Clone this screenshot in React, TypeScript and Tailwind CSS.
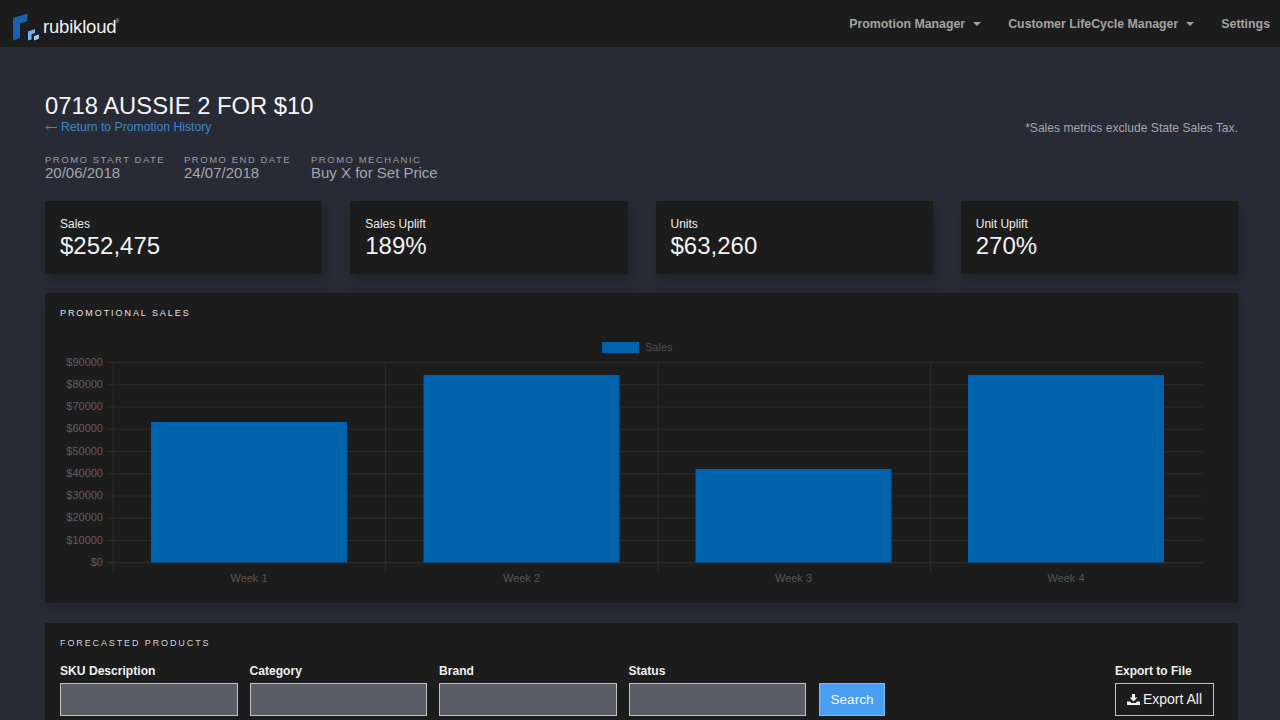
const font = "font-['Liberation_Sans',Arial,sans-serif]";

function Caret() {
  return <span className="ml-[8px] inline-block h-0 w-0 border-x-[4px] border-t-[4px] border-x-transparent border-t-[#a3a3a3] align-middle" />;
}

function Stat({ label, value }: { label: string; value: string }) {
  return (
    <div className="h-[73px] flex-1 bg-[#1c1c1c] px-[15px] pt-[16px] shadow-[3px_6px_12px_rgba(0,0,0,0.25)]">
      <div className="text-[12px] leading-[15px] text-[#eeeeee]">{label}</div>
      <div className="text-[24px] leading-[28px] text-[#f2f2f2]">{value}</div>
    </div>
  );
}

function Meta({ label, value, className }: { label: string; value: string; className: string }) {
  return (
    <div className={className}>
      <div className="text-[9.5px] leading-[10px] tracking-[0.16em] text-[#9a9ca3]">{label}</div>
      <div className="text-[15px] leading-[16px] text-[#a4a6ac]">{value}</div>
    </div>
  );
}

function Field({ label }: { label: string }) {
  return (
    <div className="w-[177.5px]">
      <div className="text-[12.1px] font-bold leading-[16px] text-[#f0f0f0]">{label}</div>
      <div className="mt-[4px] h-[33px] border border-[#c4c4c4] bg-[#5b5d66]" />
    </div>
  );
}

const yTicks = ["$90000", "$80000", "$70000", "$60000", "$50000", "$40000", "$30000", "$20000", "$10000", "$0"];
const bars = [
  { x: 151, w: 196, top: 422, label: "Week 1" },
  { x: 423.5, w: 196, top: 375, label: "Week 2" },
  { x: 695.5, w: 196, top: 469, label: "Week 3" },
  { x: 968, w: 196, top: 375, label: "Week 4" },
];

function Chart() {
  return (
    <svg width="1193" height="268" viewBox="45 335 1193 268" className="block">
      <rect x="602" y="342" width="37" height="11" fill="#0061ad" />
      <text x="645" y="351" fontSize="11" fill="#4c4c4c">Sales</text>
      {yTicks.map((t, i) => {
        const y = 362.5 + i * 22.25;
        return (
          <g key={t}>
            <line x1="107" x2="1203" y1={y} y2={y} stroke={i === 9 ? "#333333" : "#2b2b2b"} />
            <text x="103" y={y + 3} fontSize="11" fill="#5f5f5f" textAnchor="end">{t}</text>
          </g>
        );
      })}
      {[113, 385.5, 658, 930.5].map((x) => (
        <line key={x} x1={x} x2={x} y1="362" y2="573" stroke="#2b2b2b" />
      ))}
      {bars.map((b) => (
        <g key={b.label}>
          <rect x={b.x} y={b.top} width={b.w} height={562.5 - b.top} fill="#0061ad" />
          <text x={b.x + b.w / 2} y="582" fontSize="11" fill="#555555" textAnchor="middle">{b.label}</text>
        </g>
      ))}
    </svg>
  );
}

export default function App() {
  return (
    <div className={`${font} h-[720px] w-[1280px] overflow-hidden bg-[#282b36]`}>
      <header className="flex h-[47px] items-center justify-between bg-[#1c1c1c] pr-[10px]">
        <div className="flex items-center">
          <svg width="42" height="38" viewBox="0 0 42 38" className="block">
            <path d="M13 13 L27.5 8.5 L27.5 16 L20 18.5 L20 33 L13 35.5 Z" fill="#1a62b0" />
            <path d="M28 26.5 L35 24 L35 28 L31.5 29.2 L31.5 34.5 L28 35.5 Z" fill="#6db0ee" />
            <path d="M34 31 L39 29.5 L39 33.8 L34 35.5 Z" fill="#9ccaf5" />
          </svg>
          <span className="ml-[1px] mt-[7px] text-[18.5px] leading-[20px] tracking-[-0.01em] text-[#f0f0f0]">rubikloud</span>
          <span className="mb-[3px] -ml-[1px] text-[5px] text-[#cccccc]">®</span>
        </div>
        <nav className="flex items-center pt-[1px] text-[12.35px] font-bold text-[#a3a3a3]">
          <span>Promotion Manager</span>
          <Caret />
          <span className="ml-[27px]">Customer LifeCycle Manager</span>
          <Caret />
          <span className="ml-[27px]">Settings</span>
        </nav>
      </header>

      <main className="pl-[45px] pr-[42px]">
        <div className="flex items-start justify-between pt-[46px]">
          <div>
            <h1 className="text-[23.8px] leading-[26px] text-[#f5f5f5]">0718 AUSSIE 2 FOR $10</h1>
            <div className="mt-[1px] flex items-center text-[12.2px] leading-[15px] text-[#3f86cc]">
              <svg width="16" height="7" viewBox="0 0 16 7" className="block">
                <path d="M12 3.5 H1 M3.5 1 L1 3.500 L3.500 6" fill="none" stroke="#3f86cc" strokeWidth="1" />
              </svg>
              Return to Promotion History
            </div>
          </div>
          <div className="pt-[27px] text-[12.1px] leading-[16px] text-[#a4a6ac]">*Sales metrics exclude State Sales Tax.</div>
        </div>

        <div className="mt-[19px] flex">
          <Meta className="w-[139px]" label="PROMO START DATE" value="20/06/2018" />
          <Meta className="w-[127px]" label="PROMO END DATE" value="24/07/2018" />
          <Meta className="w-[140px]" label="PROMO MECHANIC" value="Buy X for Set Price" />
        </div>

        <div className="mt-[20px] flex gap-[28px]">
          <Stat label="Sales" value="$252,475" />
          <Stat label="Sales Uplift" value="189%" />
          <Stat label="Units" value="$63,260" />
          <Stat label="Unit Uplift" value="270%" />
        </div>

        <section className="mt-[19px] h-[310px] bg-[#1c1c1c] shadow-[3px_6px_12px_rgba(0,0,0,0.2)]">
          <h2 className="px-[15px] pt-[15px] text-[9px] leading-[11px] tracking-[0.215em] text-[#e4e4e4]">PROMOTIONAL SALES</h2>
          <div className="pt-[16px]">
            <Chart />
          </div>
        </section>

        <section className="mt-[20px] h-[120px] bg-[#1c1c1c] px-[15px] pt-[15px]">
          <h2 className="text-[9px] leading-[11px] tracking-[0.21em] text-[#d4d4d4]">FORECASTED PRODUCTS</h2>
          <div className="mt-[14px] flex items-end">
            <div className="flex gap-[12px]">
              <Field label="SKU Description" />
              <Field label="Category" />
              <Field label="Brand" />
              <Field label="Status" />
            </div>
            <button className="ml-[13px] h-[33px] w-[66px] border border-[#7ab8f5] bg-[#4a9ff5] pt-[1px] text-[13.5px] text-[#f2f8ff]">Search</button>
            <div className="ml-auto mr-[9px] w-[99px]">
              <div className="text-[12px] font-bold leading-[16px] text-[#f0f0f0]">Export to File</div>
              <button className="mt-[4px] flex h-[33px] w-[99px] items-center justify-center gap-[3px] border border-[#c4c4c4] bg-[#1c1c1c] text-[14px] text-[#f0f0f0]">
                <svg width="13" height="11" viewBox="0 0 13 11" className="block">
                  <path d="M5 0 H8 V3.5 H10.5 L6.5 7.5 L2.5 3.5 H5 Z M0 7.5 H3 L4.5 9 H8.5 L10 7.5 H13 V11 H0 Z" fill="#f0f0f0" />
                </svg>
                Export All
              </button>
            </div>
          </div>
        </section>
      </main>
    </div>
  );
}
